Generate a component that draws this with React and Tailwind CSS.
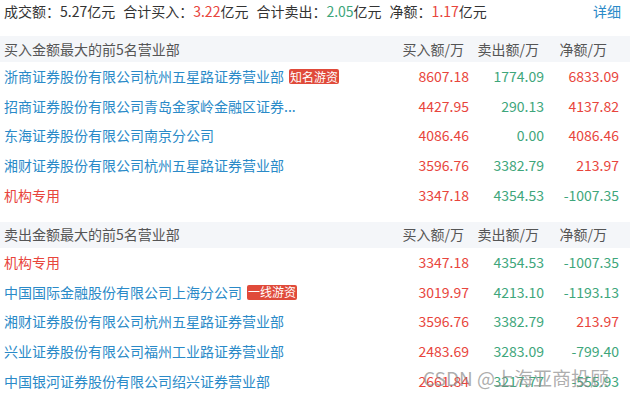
const RED = "text-[#e8453c]";
const GREEN = "text-[#3ea67b]";

const buyRows = [
  { name: "浙商证券股份有限公司杭州五星路证券营业部", tag: "知名游资", buy: "8607.18", sell: "1774.09", net: "6833.09" },
  { name: "招商证券股份有限公司青岛金家岭金融区证券...", buy: "4427.95", sell: "290.13", net: "4137.82" },
  { name: "东海证券股份有限公司南京分公司", buy: "4086.46", sell: "0.00", net: "4086.46" },
  { name: "湘财证券股份有限公司杭州五星路证券营业部", buy: "3596.76", sell: "3382.79", net: "213.97" },
  { name: "机构专用", inst: true, buy: "3347.18", sell: "4354.53", net: "-1007.35" },
];

const sellRows = [
  { name: "机构专用", inst: true, buy: "3347.18", sell: "4354.53", net: "-1007.35" },
  { name: "中国国际金融股份有限公司上海分公司", tag: "一线游资", buy: "3019.97", sell: "4213.10", net: "-1193.13" },
  { name: "湘财证券股份有限公司杭州五星路证券营业部", buy: "3596.76", sell: "3382.79", net: "213.97" },
  { name: "兴业证券股份有限公司福州工业路证券营业部", buy: "2483.69", sell: "3283.09", net: "-799.40" },
  { name: "中国银河证券股份有限公司绍兴证券营业部", buy: "2661.84", sell: "3217.77", net: "-555.93" },
];

function Header({ title }) {
  return (
    <div className="flex items-center h-[26px] bg-[#f4f6f9] text-[#555] pl-1 pr-[11px]">
      <div className="flex-1">{title}</div>
      <div className="w-[75px] text-right pr-[5px]">买入额/万</div>
      <div className="w-[75px] text-right pr-[5px]">卖出额/万</div>
      <div className="w-[75px] text-right pr-[12px]">净额/万</div>
    </div>
  );
}

function Row({ r }) {
  const netColor = r.net.startsWith("-") ? GREEN : RED;
  return (
    <div className="flex items-center h-[29.6px] pl-1 pr-[11px]">
      <div className="flex-1 flex items-center min-w-0">
        <span className={r.inst ? RED : "text-[#2a8ac8]"}>{r.name}</span>
        {r.tag && (
          <span className="ml-[5px] px-[1px] h-[15px] flex items-center bg-[#e04a3a] text-white text-[12px] leading-none rounded-[2px]">
            {r.tag}
          </span>
        )}
      </div>
      <div className={`w-[75px] text-right ${RED}`}>{r.buy}</div>
      <div className={`w-[75px] text-right ${GREEN}`}>{r.sell}</div>
      <div className={`w-[75px] text-right ${netColor}`}>{r.net}</div>
    </div>
  );
}

export default function App() {
  return (
    <div
      className="relative w-[630px] h-[396px] overflow-hidden bg-white text-[14px] text-[#333]"
      style={{ fontFamily: '"Noto Sans CJK SC", "Noto Sans", sans-serif' }}
    >
      <div className="flex items-center h-[23px] pl-1 pr-[9px] gap-2">
        <span>成交额：5.27亿元</span>
        <span>
          合计买入：<span className={RED}>3.22</span>亿元
        </span>
        <span>
          合计卖出：<span className={GREEN}>2.05</span>亿元
        </span>
        <span>
          净额：<span className={RED}>1.17</span>亿元
        </span>
        <span className="ml-auto text-[#2a8ac8]">详细</span>
      </div>

      <div className="mt-[13px]">
        <Header title="买入金额最大的前5名营业部" />
        {buyRows.map((r, i) => (
          <Row key={i} r={r} />
        ))}
      </div>

      <div className="mt-[12px]">
        <Header title="卖出金额最大的前5名营业部" />
        {sellRows.map((r, i) => (
          <Row key={i} r={r} />
        ))}
      </div>

      <div className="absolute left-[423px] top-[364px] text-[19px] text-[#8a8a8a]/70 whitespace-nowrap">
        CSDN @上海亚商投顾
      </div>
    </div>
  );
}
